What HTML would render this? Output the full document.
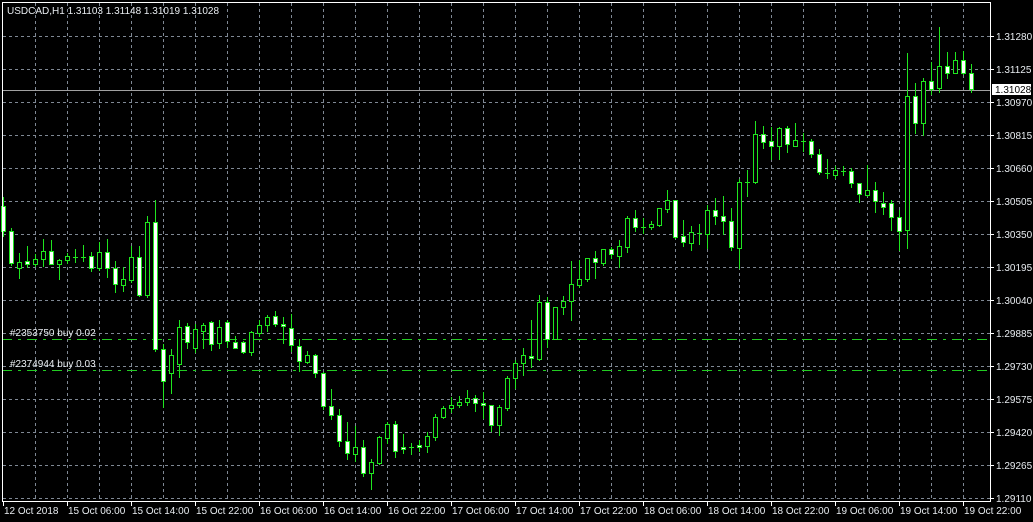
<!DOCTYPE html>
<html><head><meta charset="utf-8">
<style>
html,body{margin:0;padding:0;background:#000;width:1033px;height:522px;overflow:hidden}
svg{position:absolute;left:0;top:0}
.t{font-family:"Liberation Sans",sans-serif;font-size:10px;fill:#e8ecf0}
</style></head>
<body>
<svg id="s" width="1033" height="522" xmlns="http://www.w3.org/2000/svg" shape-rendering="crispEdges">
<g id="grid" stroke="#7f8894" stroke-width="1" stroke-dasharray="3,3"></g>
<line x1="2" y1="90.5" x2="990" y2="90.5" stroke="#a0a0a0"/>
<line x1="2" y1="339.5" x2="990" y2="339.5" stroke="#22cc22" stroke-dasharray="10,6,3,6"/>
<line x1="2" y1="370.5" x2="990" y2="370.5" stroke="#22cc22" stroke-dasharray="10,6,3,6"/>
<g id="c"></g>
<text class="t" x="10" y="336">#2353750 buy 0.02</text>
<text class="t" x="10" y="367">#2374944 buy 0.03</text>
<text class="t" x="7" y="14">USDCAD,H1  1.31103 1.31148 1.31019 1.31028</text>
<rect x="2.5" y="2.5" width="988" height="499" fill="none" stroke="#ffffff"/>
<g id="ax"></g>
<rect x="992" y="84" width="39" height="11" fill="#ffffff"/>
<text class="t" x="995" y="93" style="fill:#000">1.31028</text>
<g class="t">
<text x="996" y="40">1.31280</text><text x="996" y="73">1.31125</text>
<text x="996" y="106">1.30970</text><text x="996" y="139">1.30815</text>
<text x="996" y="172">1.30660</text><text x="996" y="205">1.30505</text>
<text x="996" y="238">1.30350</text><text x="996" y="271">1.30195</text>
<text x="996" y="304">1.30040</text><text x="996" y="337">1.29885</text>
<text x="996" y="370">1.29730</text><text x="996" y="403">1.29575</text>
<text x="996" y="436">1.29420</text><text x="996" y="469">1.29265</text>
<text x="996" y="502">1.29110</text>
</g>
<g class="t">
<text x="4" y="514">12 Oct 2018</text><text x="68" y="514">15 Oct 06:00</text>
<text x="132" y="514">15 Oct 14:00</text><text x="196" y="514">15 Oct 22:00</text>
<text x="260" y="514">16 Oct 06:00</text><text x="324" y="514">16 Oct 14:00</text>
<text x="388" y="514">16 Oct 22:00</text><text x="452" y="514">17 Oct 06:00</text>
<text x="516" y="514">17 Oct 14:00</text><text x="580" y="514">17 Oct 22:00</text>
<text x="644" y="514">18 Oct 06:00</text><text x="708" y="514">18 Oct 14:00</text>
<text x="772" y="514">18 Oct 22:00</text><text x="836" y="514">19 Oct 06:00</text>
<text x="900" y="514">19 Oct 14:00</text><text x="964" y="514">19 Oct 22:00</text>
</g>
</svg>
<script>
var NS="http://www.w3.org/2000/svg";
function el(p,n,a){var e=document.createElementNS(NS,n);for(var k in a)e.setAttribute(k,a[k]);p.appendChild(e);return e;}
var g=document.getElementById('grid');
for(var x=35;x<990;x+=32)el(g,'line',{x1:x+.5,y1:3,x2:x+.5,y2:501});
var ys=[36,69,102,135,168,201,234,267,300,333,366,399,432,465,498];
ys.forEach(function(y){el(g,'line',{x1:3,y1:y+.5,x2:990,y2:y+.5});});
var ax=document.getElementById('ax');
ys.forEach(function(y){el(ax,'line',{x1:990,y1:y+.5,x2:994,y2:y+.5,stroke:'#fff'});});
for(var x=3;x<990;x+=64)el(ax,'line',{x1:x+.5,y1:501,x2:x+.5,y2:506,stroke:'#fff'});
var D=[
[206,231,197,236,1],[231,263,228,265,1],[262,268,253,278,0],[261,264,246,267,1],[259,264,254,266,0],
[251,259,239,266,0],[251,264,240,264,1],[260,264,259,279,0],[256,260,253,263,0],[257,257,249,262,0],
[257,257,245,261,0],[256,268,252,271,1],[252,268,242,270,0],[252,268,239,277,1],[268,284,261,292,1],
[279,285,267,291,0],[257,280,246,282,0],[257,295,246,296,1],[222,295,216,297,0],[222,349,200,351,1],
[349,381,344,407,1],[355,373,349,393,0],[327,364,320,377,0],[326,342,323,348,1],[329,348,324,352,0],
[325,331,323,348,0],[322,344,321,350,1],[327,343,320,348,0],[322,341,320,347,1],[342,348,336,348,1],
[342,352,341,353,1],[332,352,331,355,0],[325,333,320,336,0],[317,325,315,331,0],[316,324,311,326,1],
[324,326,317,343,1],[328,345,314,351,1],[346,361,339,371,1],[355,362,351,363,0],[355,373,354,377,1],
[373,406,372,409,1],[406,415,389,419,1],[415,441,409,446,1],[441,453,422,459,1],[447,454,426,461,0],
[447,473,440,476,1],[462,473,459,489,0],[437,463,436,464,0],[424,438,422,443,0],[424,451,421,457,1],
[447,449,434,453,1],[447,447,443,454,0],[445,447,440,451,1],[436,446,432,452,0],[417,437,414,440,0],
[408,417,406,418,0],[405,408,397,412,0],[402,405,396,407,0],[398,402,390,405,0],[398,403,395,411,1],
[403,405,392,418,1],[405,425,405,431,1],[407,425,405,435,0],[378,408,376,410,0],[363,378,360,388,0],
[355,363,348,375,0],[356,358,320,367,1],[302,359,295,360,0],[302,339,297,347,1],[307,339,307,339,0],
[301,307,296,314,0],[284,301,261,320,0],[279,285,260,287,0],[258,279,258,281,0],[258,262,251,278,1],
[249,263,249,265,0],[249,254,247,258,1],[246,256,240,267,0],[218,247,216,252,0],[218,227,210,231,1],
[227,227,218,233,0],[224,227,221,229,0],[208,225,208,226,0],[200,209,190,212,0],[200,237,200,238,1],
[236,242,220,246,1],[232,243,226,250,0],[233,233,224,244,0],[210,234,205,248,0],[210,216,198,224,1],
[216,221,196,234,1],[221,247,208,250,1],[182,248,179,268,0],[182,182,170,196,0],[134,182,121,183,0],
[134,142,126,148,1],[141,146,127,159,1],[128,146,127,159,0],[128,144,126,152,1],[140,146,123,146,0],
[141,141,133,151,0],[141,154,139,157,1],[154,172,149,174,1],[173,173,159,178,0],[170,175,166,178,0],
[171,171,166,175,0],[171,183,168,187,1],[183,194,183,202,1],[190,195,165,196,0],[190,201,182,212,1],
[203,207,192,214,1],[203,217,200,230,1],[217,231,210,250,1],[96,230,53,248,0],[96,123,83,133,1],
[81,123,78,135,0],[81,89,62,94,1],[66,88,27,92,0],[66,73,52,78,1],[60,73,52,73,0],
[60,73,51,74,1],[73,89,64,92,1]
];
var c=document.getElementById('c'),G='#1fe61f';
D.forEach(function(d,k){
 var x=3+8*k;
 el(c,'line',{x1:x+.5,y1:d[2],x2:x+.5,y2:d[3]+1,stroke:G});
 if(d[1]-d[0]<1){el(c,'line',{x1:x-2,y1:d[0]+.5,x2:x+3,y2:d[0]+.5,stroke:G});}
 else el(c,'rect',{x:x-1.5,y:d[0]+.5,width:4,height:d[1]-d[0],fill:d[4]?'#fff':'#000',stroke:G});
});
</script>
</body></html>
